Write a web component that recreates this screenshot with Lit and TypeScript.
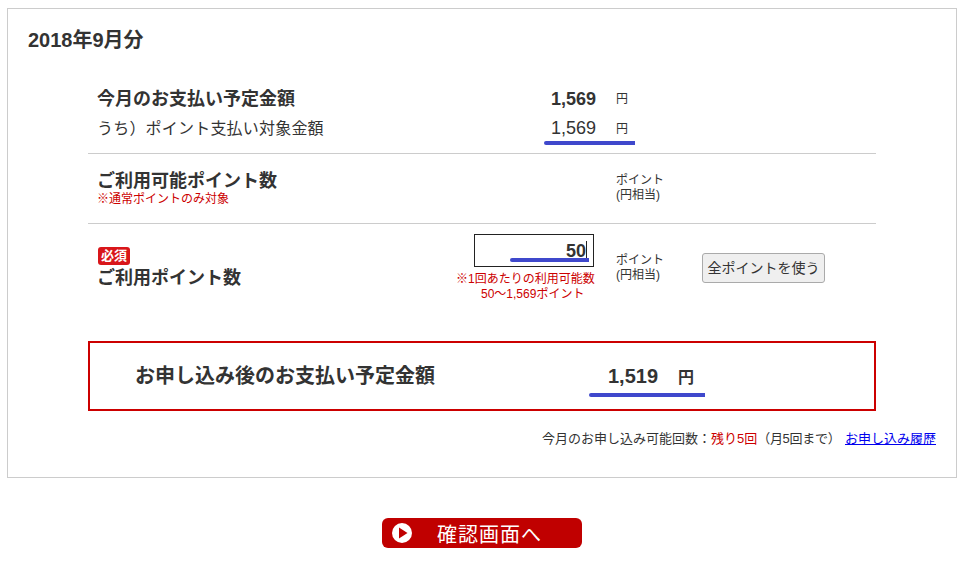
import {css, html, LitElement} from 'lit';
import {customElement} from 'lit/decorators.js';

@customElement('app-root')
export class AppRoot extends LitElement {
  static override styles = css`
    :host {
      display: block;
      width: 968px;
      height: 561px;
      background: #fff;
      color: #333;
      font-family: 'Liberation Sans', 'Noto Sans CJK JP', sans-serif;
      overflow: hidden;
    }
    .panel {
      box-sizing: border-box;
      width: 950px;
      height: 470px;
      margin: 8px 0 0 7px;
      border: 1px solid #ccc;
      padding: 17px 20px 0;
    }
    h2 {
      margin: 0;
      font-size: 20px;
      line-height: 28px;
      font-weight: bold;
    }
    .form {
      width: 788px;
      margin: 29px 0 0 60px;
    }
    .row {
      display: grid;
      grid-template-columns: 359px 140px 106px 1fr;
      padding-left: 9px;
      border-bottom: 1px solid #ccc;
    }
    .row.last {
      border-bottom: none;
    }
    .summary {
      height: 70px;
      grid-auto-rows: 30px;
      align-items: center;
    }
    .summary .strong,
    .summary .plain,
    .summary .yen {
      margin-top: -2px;
    }
    .strong {
      font-size: 18px;
      font-weight: bold;
    }
    .plain {
      font-size: 16px;
      letter-spacing: 0.2px;
    }
    .amount {
      text-align: right;
      font-size: 18px;
    }
    .amount.bold {
      font-weight: bold;
      margin-top: 2px;
    }
    .yen {
      padding-left: 20px;
      font-size: 12px;
    }
    .marked {
      position: relative;
    }
    .marked::after {
      content: '';
      position: absolute;
      left: 88px;
      top: 23px;
      width: 91px;
      height: 4px;
      border-radius: 2px 0 0 2px;
      background: #3f48cc;
    }
    .available {
      height: 70px;
      align-items: start;
      padding-top: 17px;
      box-sizing: border-box;
    }
    .available .strong {
      line-height: 20px;
    }
    .note {
      color: #c00;
      font-size: 12px;
      line-height: 16px;
    }
    .unit {
      padding-left: 20px;
      font-size: 12px;
      line-height: 15px;
      margin-top: 2px;
    }
    .usage {
      height: 117px;
      box-sizing: border-box;
      padding-top: 10px;
      align-items: start;
    }
    .badge {
      display: block;
      box-sizing: border-box;
      width: 32px;
      height: 18px;
      margin: 13px 0 1px 1px;
      border-radius: 3px;
      background: #d9161a;
      color: #fff;
      font-size: 13px;
      font-weight: bold;
      line-height: 18px;
      text-align: center;
    }
    .usage .strong {
      line-height: 24px;
    }
    .entry {
      display: block;
    }
    .field {
      position: relative;
      box-sizing: border-box;
      width: 120px;
      height: 33px;
      margin-left: 18px;
      border: 1px solid #222;
      padding-right: 7px;
      font-size: 18px;
      font-weight: bold;
      line-height: 33px;
      text-align: right;
    }
    .field::before {
      content: '';
      position: absolute;
      right: 6px;
      top: 6px;
      width: 1px;
      height: 21px;
      background: #222;
    }
    .field::after {
      content: '';
      position: absolute;
      left: 35px;
      top: 23px;
      width: 79px;
      height: 4px;
      border-radius: 2px 0 0 2px;
      background: #3f48cc;
    }
    .rule {
      margin-top: 5px;
      color: #c00;
      font-size: 12px;
      line-height: 15px;
      white-space: nowrap;
    }
    .rule span {
      display: block;
    }
    .rule .range {
      padding-left: 25px;
    }
    .usage .unit {
      margin-top: 19px;
    }
    button {
      box-sizing: border-box;
      width: 123px;
      height: 30px;
      margin-top: 19px;
      padding: 0 0 2px;
      border: 1px solid #aaa;
      border-radius: 3px;
      background: #efefef;
      color: #333;
      font: inherit;
      font-size: 14px;
    }
    .total {
      position: relative;
      display: grid;
      grid-template-columns: 453px auto auto;
      column-gap: 20px;
      justify-content: start;
      align-items: center;
      box-sizing: border-box;
      height: 70px;
      padding-left: 45px;
      border: 2px solid #c00;
      font-weight: bold;
    }
    .total-label {
      font-size: 20px;
      margin-top: -4px;
    }
    .total-amount {
      font-size: 20px;
    }
    .total-yen {
      font-size: 16px;
    }
    .total::after {
      content: '';
      position: absolute;
      left: 499px;
      top: 50px;
      width: 116px;
      height: 4px;
      border-radius: 2px 0 0 2px;
      background: #3f48cc;
    }
    .quota {
      margin-top: 19px;
      font-size: 13px;
      line-height: 18px;
      text-align: right;
    }
    .quota em {
      color: #c00;
      font-style: normal;
    }
    .quota .limit {
      letter-spacing: -0.3px;
    }
    .quota a {
      margin-left: 1px;
      color: #00e;
      text-decoration: underline;
    }
    .actions {
      display: flex;
      justify-content: center;
      width: 950px;
      margin: 40px 0 0 7px;
    }
    .confirm {
      display: grid;
      grid-template-columns: 45px auto;
      align-items: center;
      box-sizing: border-box;
      width: 200px;
      height: 30px;
      padding-left: 10px;
      border-radius: 6px;
      background: #c00000;
      color: #fff;
      font-size: 20px;
      letter-spacing: 1px;
      white-space: nowrap;
    }
    .confirm svg {
      display: block;
    }
  `;

  override render() {
    return html`
      <section class="panel">
        <h2>2018年9月分</h2>
        <div class="form">
          <div class="row summary">
            <div class="strong">今月のお支払い予定金額</div>
            <div class="amount bold">1,569</div>
            <div class="yen">円</div>
            <div></div>
            <div class="plain">うち）ポイント支払い対象金額</div>
            <div class="amount marked">1,569</div>
            <div class="yen">円</div>
          </div>
          <div class="row available">
            <div>
              <div class="strong">ご利用可能ポイント数</div>
              <div class="note">※通常ポイントのみ対象</div>
            </div>
            <div></div>
            <div class="unit">ポイント<br />(円相当)</div>
          </div>
          <div class="row usage last">
            <div>
              <span class="badge">必須</span>
              <div class="strong">ご利用ポイント数</div>
            </div>
            <div class="entry">
              <div class="field">50</div>
              <div class="rule">
                <span>※1回あたりの利用可能数</span>
                <span class="range">50～1,569ポイント</span>
              </div>
            </div>
            <div class="unit">ポイント<br />(円相当)</div>
            <div><button>全ポイントを使う</button></div>
          </div>
          <div class="total">
            <div class="total-label">お申し込み後のお支払い予定金額</div>
            <div class="total-amount">1,519</div>
            <div class="total-yen">円</div>
          </div>
        </div>
        <div class="quota">
          今月のお申し込み可能回数：<em>残り5回</em><span class="limit">（月5回まで）</span>
          <a href="#">お申し込み履歴</a>
        </div>
      </section>
      <div class="actions">
        <div class="confirm">
          <svg width="20" height="20" viewBox="0 0 20 20">
            <circle cx="10" cy="10" r="10" fill="#fff"></circle>
            <path d="M7 4.5 L15.5 10 L7 15.5 Z" fill="#c00000"></path>
          </svg>
          <span>確認画面へ</span>
        </div>
      </div>
    `;
  }
}
